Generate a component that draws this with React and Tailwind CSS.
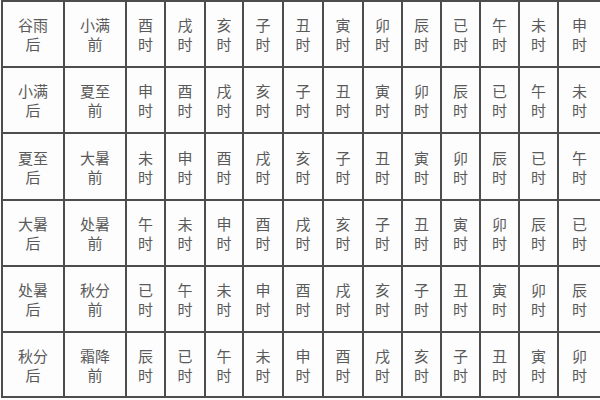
import React from "react";

const rows = [
  ["谷雨", "小满", "酉戌亥子丑寅卯辰已午未申"],
  ["小满", "夏至", "申酉戌亥子丑寅卯辰已午未"],
  ["夏至", "大暑", "未申酉戌亥子丑寅卯辰已午"],
  ["大暑", "处暑", "午未申酉戌亥子丑寅卯辰已"],
  ["处暑", "秋分", "已午未申酉戌亥子丑寅卯辰"],
  ["秋分", "霜降", "辰已午未申酉戌亥子丑寅卯"],
];

function Cell({ top, bottom }) {
  return (
    <div className="bg-[#fdfdfd] flex flex-col items-center justify-center text-[15px] leading-[19px] text-[#5a5a5a]">
      <span>{top}</span>
      <span>{bottom}</span>
    </div>
  );
}

export default function App() {
  return (
    <div
      className="w-[600px] h-[400px] bg-[#fdfdfd] pl-[1px] overflow-hidden"
      style={{ fontFamily: '"Noto Sans CJK SC", sans-serif' }}
    >
      <div className="grid grid-cols-[60px_60px_37px_38px_36px_38px_38px_38px_37px_37px_37px_37px_37px_41px] grid-rows-[64px_64px_65px_64px_64px_63px] gap-[2px] pl-[2px] pt-[2px] pb-[2px] bg-[#4d4d4d]">
        {rows.map((r, i) => (
          <React.Fragment key={i}>
            <Cell top={r[0]} bottom="后" />
            <Cell top={r[1]} bottom="前" />
            {Array.from(r[2]).map((c, j) => (
              <Cell key={j} top={c} bottom="时" />
            ))}
          </React.Fragment>
        ))}
      </div>
    </div>
  );
}
